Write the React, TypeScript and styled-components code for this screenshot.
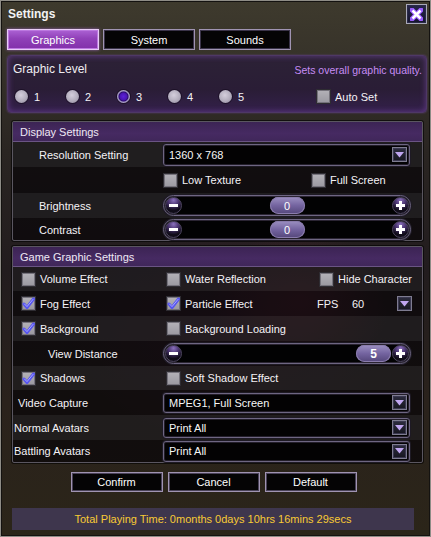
import React from 'react';
import styled, { createGlobalStyle, css } from 'styled-components';

const GlobalStyle = createGlobalStyle`
  html, body { margin: 0; padding: 0; background: #000; }
  * { box-sizing: border-box; }
  body {
    font-family: 'Liberation Sans', Arial, sans-serif;
    font-size: 11px;
    color: #f4f2f6;
  }
`;

const Window = styled.div`
  width: 431px;
  height: 537px;
  display: flex;
  flex-direction: column;
  overflow: hidden;
  border: 1px solid #8e8c86;
  box-shadow: inset 0 0 0 1px #141210;
  background:
    radial-gradient(ellipse 90px 70px at 300px 300px, rgba(120, 40, 60, 0.45), transparent),
    radial-gradient(ellipse 160px 110px at 230px 330px, rgba(70, 30, 60, 0.5), transparent),
    linear-gradient(180deg, #3e3a2d 0%, #37332a 10%, #2a2522 28%, #221c1e 50%, #2a221c 75%, #2b2519 100%);
`;

const TitleBar = styled.div`
  height: 27px;
  display: flex;
  align-items: flex-start;
  padding: 0 3px 0 7px;
`;

const Title = styled.div`
  font-weight: bold;
  font-size: 12px;
  line-height: 26px;
  color: #f2f2f2;
`;

const CloseButton = styled.div`
  margin-left: auto;
  margin-top: 3px;
  width: 21px;
  height: 20px;
  display: flex;
  align-items: center;
  justify-content: center;
  background: linear-gradient(180deg, #26264a, #14142c);
  border: 1px solid #a8a8b8;
  box-shadow: inset 0 0 0 1px #2a2a48;
`;

const TabRow = styled.div`
  display: flex;
  gap: 4px;
  margin-top: 1px;
  padding-left: 6px;
`;

const Tab = styled.div<{ $active?: boolean }>`
  width: 92px;
  height: 21px;
  display: flex;
  align-items: center;
  justify-content: center;
  color: #fff;
  ${(p) =>
    p.$active
      ? css`
          background: linear-gradient(180deg, #ac62d4 0%, #9040b8 45%, #8230aa 100%);
          border: 1px solid #e8ccf6;
          box-shadow: inset 0 0 0 1px #bc78e0, 0 0 3px rgba(200, 120, 255, 0.6);
        `
      : css`
          background: #050405;
          border: 1px solid #a094b2;
          box-shadow: inset 0 0 0 1px #3a3348;
        `}
`;

const LevelPanel = styled.div`
  margin: 5px 3px 0 6px;
  height: 58px;
  border-radius: 4px;
  border: 1px solid #4e3866;
  background: linear-gradient(180deg, #2c2236 0%, #2a1d36 60%, #33204a 100%);
  box-shadow: inset 0 0 6px rgba(160, 90, 220, 0.45), 0 0 2px rgba(120, 70, 170, 0.6);
  padding: 0 4px 0 5px;
  display: flex;
  flex-direction: column;
`;

const LevelTop = styled.div`
  height: 26px;
  display: flex;
  align-items: center;
  justify-content: space-between;
`;

const LevelTitle = styled.span`
  font-size: 12px;
  color: #f0eef2;
`;

const LevelHint = styled.span`
  font-size: 10.5px;
  color: #c68cf4;
  margin-top: 3px;
`;

const RadioRow = styled.div`
  height: 32px;
  display: flex;
  align-items: center;
  padding-left: 2px;
`;

const RadioItem = styled.div`
  width: 51px;
  display: flex;
  align-items: center;
  gap: 6px;
`;

const AutoSetCell = styled.div`
  margin-left: 46px;
`;

const Radio = styled.span<{ $on?: boolean }>`
  width: 13px;
  height: 13px;
  border-radius: 50%;
  box-shadow: 0 0 0 1px rgba(20, 10, 30, 0.6);
  background: ${(p) =>
    p.$on
      ? 'radial-gradient(circle at 50% 50%, #5c22d8 0, #4a14b4 3.5px, #2c0c70 4.5px, #9a8cc0 5.5px, #b8b0cc 6.5px)'
      : 'radial-gradient(circle at 45% 40%, #d4cedc 0, #b2acbc 55%, #8a8496 100%)'};
`;

const Panel = styled.div<{ $h: number; $mt: number }>`
  margin: ${(p) => p.$mt}px 7px 0 11px;
  height: ${(p) => p.$h}px;
  border: 1px solid #5a5660;
  border-radius: 2px;
  box-shadow: 0 0 0 1px rgba(0, 0, 0, 0.6);
  background: rgba(8, 6, 8, 0.72);
  display: flex;
  flex-direction: column;
`;

const PanelHeader = styled.div`
  height: 20px;
  flex: none;
  display: flex;
  align-items: center;
  padding-left: 7px;
  color: #eee8f4;
  background: linear-gradient(180deg, #3c2454 0%, #462a62 60%, #40275a 100%);
  border-bottom: 1px solid #6a5484;
`;

const Row = styled.div<{ $h: number; $alt?: boolean; $pl?: number }>`
  height: ${(p) => p.$h}px;
  flex: none;
  display: flex;
  align-items: center;
  padding-left: ${(p) => p.$pl ?? 0}px;
  background: ${(p) => (p.$alt ? 'rgba(255, 255, 255, 0.065)' : 'transparent')};
`;

const LabelCell = styled.div<{ $w: number; $pl: number }>`
  width: ${(p) => p.$w}px;
  padding-left: ${(p) => p.$pl}px;
  flex: none;
  white-space: nowrap;
`;

const CheckItem = styled.div<{ $w?: number }>`
  width: ${(p) => (p.$w ? `${p.$w}px` : 'auto')};
  flex: none;
  display: flex;
  align-items: center;
  gap: 4px;
  white-space: nowrap;
`;

const Box = styled.span`
  width: 15px;
  height: 15px;
  flex: none;
  border: 1px solid #2e2c32;
  background: linear-gradient(180deg, #b4b2b8, #9a98a0);
  box-shadow: inset 0 0 0 1px #76737c;
  display: flex;
  align-items: center;
  justify-content: center;
`;

const Select = styled.div<{ $h: number }>`
  width: 247px;
  height: ${(p) => p.$h}px;
  flex: none;
  display: flex;
  align-items: center;
  padding: 0 2px 0 5px;
  background: #030203;
  border: 1px solid #6e6682;
  border-radius: 3px;
  box-shadow: 0 0 0 1px #1e1a24, inset 0 0 0 1px #231e2a;
  color: #f6f6f6;
`;

const ArrowButton = styled.span`
  margin-left: auto;
  width: 15px;
  height: 15px;
  flex: none;
  display: flex;
  align-items: center;
  justify-content: center;
  background: linear-gradient(180deg, #2c2c3e, #16161f);
  border: 1px solid #7e7c90;
  box-shadow: inset 0 0 0 1px #3a3850;
`;

const Track = styled.div`
  width: 248px;
  height: 21px;
  flex: none;
  display: flex;
  align-items: center;
  padding: 0 1px;
  border-radius: 11px;
  background: #020203;
  border: 1px solid #6e6682;
  box-shadow: 0 0 0 1px #1e1a24, inset 0 0 0 1px #2a2432;
`;

const RoundButton = styled.span`
  width: 17px;
  height: 17px;
  flex: none;
  border-radius: 50%;
  display: flex;
  align-items: center;
  justify-content: center;
  background: radial-gradient(circle at 50% 15%, #8a70bc 0%, #4a3470 35%, #100c18 70%);
  border: 1px solid #4e4660;
`;

const ThumbArea = styled.div`
  position: relative;
  flex: 1;
  height: 17px;
`;

const Thumb = styled.span<{ $bold?: boolean }>`
  position: absolute;
  top: 0;
  width: 35px;
  height: 17px;
  border-radius: 9px;
  display: flex;
  align-items: center;
  justify-content: center;
  background: linear-gradient(180deg, #9c90c2 0%, #7464a0 50%, #54467a 100%);
  box-shadow: inset 0 0 0 1px #8a7cac;
  color: #fff;
  font-size: ${(p) => (p.$bold ? 12 : 11)}px;
  font-weight: ${(p) => (p.$bold ? 'bold' : 'normal')};
`;

const FpsCell = styled.div`
  flex: 1;
  display: flex;
  align-items: center;
  margin-left: -2px;
  padding-right: 10px;
`;

const FpsLabel = styled.span`
  width: 35px;
`;

const ButtonRow = styled.div`
  margin-top: 9px;
  display: flex;
  justify-content: center;
  gap: 5px;
  padding-right: 4px;
`;

const ActionButton = styled.div`
  width: 92px;
  height: 20px;
  display: flex;
  align-items: center;
  justify-content: center;
  color: #fff;
  background: #050405;
  border: 1px solid #a094b2;
  box-shadow: inset 0 0 0 1px #4a4258;
`;

const Footer = styled.div`
  margin: 16px 0 0 11px;
  width: 402px;
  height: 22px;
  display: flex;
  align-items: center;
  justify-content: center;
  background: rgba(78, 70, 120, 0.55);
  color: #f8ca34;
`;

const CheckMark = () => (
  <svg width="13" height="13" viewBox="0 0 13 13">
    <path d="M2 7 L5 10.5 L11.5 2" fill="none" stroke="#5654f0" strokeWidth="3" strokeLinecap="round" strokeLinejoin="round" />
    <path d="M2.5 7 L5 9.6 L11 2.4" fill="none" stroke="#aaa8ff" strokeWidth="1" strokeLinecap="round" />
  </svg>
);

const Check = ({ label, checked, w }: { label: string; checked?: boolean; w?: number }) => (
  <CheckItem $w={w}>
    <Box>{checked && <CheckMark />}</Box>
    <span>{label}</span>
  </CheckItem>
);

const DownArrow = () => (
  <svg width="9" height="6" viewBox="0 0 9 6">
    <path d="M0 0 H9 L4.5 5.5 Z" fill="#c0a6f0" />
  </svg>
);

const Dropdown = ({ value, h }: { value: string; h: number }) => (
  <Select $h={h}>
    <span>{value}</span>
    <ArrowButton>
      <DownArrow />
    </ArrowButton>
  </Select>
);

const Slider = ({ value, min, max, bold }: { value: number; min: number; max: number; bold?: boolean }) => {
  const pct = (value - min) / (max - min);
  return (
    <Track>
      <RoundButton>
        <svg width="9" height="9" viewBox="0 0 9 9">
          <rect x="0" y="3" width="9" height="3" fill="#fff" />
        </svg>
      </RoundButton>
      <ThumbArea>
        <Thumb $bold={bold} style={{ left: `calc(${pct} * (100% - 37px) + 1px)` }}>
          {value}
        </Thumb>
      </ThumbArea>
      <RoundButton>
        <svg width="9" height="9" viewBox="0 0 9 9">
          <rect x="0" y="3" width="9" height="3" fill="#fff" />
          <rect x="3" y="0" width="3" height="9" fill="#fff" />
        </svg>
      </RoundButton>
    </Track>
  );
};

const levels = [1, 2, 3, 4, 5];

export default function App() {
  return (
    <>
      <GlobalStyle />
      <Window>
        <TitleBar>
          <Title>Settings</Title>
          <CloseButton>
            <svg width="13" height="13" viewBox="0 0 13 13">
              <path d="M2 2 L11 11 M11 2 L2 11" stroke="#9a5cff" strokeWidth="5" strokeLinecap="square" />
              <path d="M2.5 2.5 L10.5 10.5 M10.5 2.5 L2.5 10.5" stroke="#fff" strokeWidth="2.6" />
            </svg>
          </CloseButton>
        </TitleBar>

        <TabRow>
          <Tab $active>Graphics</Tab>
          <Tab>System</Tab>
          <Tab>Sounds</Tab>
        </TabRow>

        <LevelPanel>
          <LevelTop>
            <LevelTitle>Graphic Level</LevelTitle>
            <LevelHint>Sets overall graphic quality.</LevelHint>
          </LevelTop>
          <RadioRow>
            {levels.map((l) => (
              <RadioItem key={l}>
                <Radio $on={l === 3} />
                <span>{l}</span>
              </RadioItem>
            ))}
            <AutoSetCell>
              <Check label="Auto Set" />
            </AutoSetCell>
          </RadioRow>
        </LevelPanel>

        <Panel $h={120} $mt={8}>
          <PanelHeader>Display Settings</PanelHeader>
          <Row $h={25} $alt>
            <LabelCell $w={150} $pl={26}>Resolution Setting</LabelCell>
            <Dropdown value="1360 x 768" h={22} />
          </Row>
          <Row $h={26} $pl={150}>
            <Check label="Low Texture" w={148} />
            <Check label="Full Screen" />
          </Row>
          <Row $h={25} $alt>
            <LabelCell $w={150} $pl={26}>Brightness</LabelCell>
            <Slider value={0} min={-10} max={10} />
          </Row>
          <Row $h={23}>
            <LabelCell $w={150} $pl={26}>Contrast</LabelCell>
            <Slider value={0} min={-10} max={10} />
          </Row>
        </Panel>

        <Panel $h={217} $mt={5}>
          <PanelHeader>Game Graphic Settings</PanelHeader>
          <Row $h={24} $alt $pl={8}>
            <Check label="Volume Effect" w={145} />
            <Check label="Water Reflection" w={153} />
            <Check label="Hide Character" />
          </Row>
          <Row $h={25} $pl={8}>
            <Check label="Fog Effect" checked w={145} />
            <Check label="Particle Effect" checked w={153} />
            <FpsCell>
              <FpsLabel>FPS</FpsLabel>
              <span>60</span>
              <ArrowButton>
                <DownArrow />
              </ArrowButton>
            </FpsCell>
          </Row>
          <Row $h={25} $alt $pl={8}>
            <Check label="Background" checked w={145} />
            <Check label="Background Loading" />
          </Row>
          <Row $h={25}>
            <LabelCell $w={150} $pl={35}>View Distance</LabelCell>
            <Slider value={5} min={1} max={5} bold />
          </Row>
          <Row $h={24} $alt $pl={8}>
            <Check label="Shadows" checked w={145} />
            <Check label="Soft Shadow Effect" />
          </Row>
          <Row $h={25}>
            <LabelCell $w={150} $pl={5}>Video Capture</LabelCell>
            <Dropdown value="MPEG1, Full Screen" h={20} />
          </Row>
          <Row $h={25} $alt>
            <LabelCell $w={150} $pl={1}>Normal Avatars</LabelCell>
            <Dropdown value="Print All" h={20} />
          </Row>
          <Row $h={22}>
            <LabelCell $w={150} $pl={1}>Battling Avatars</LabelCell>
            <Dropdown value="Print All" h={21} />
          </Row>
        </Panel>

        <ButtonRow>
          <ActionButton>Confirm</ActionButton>
          <ActionButton>Cancel</ActionButton>
          <ActionButton>Default</ActionButton>
        </ButtonRow>

        <Footer>Total Playing Time: 0months 0days 10hrs 16mins 29secs</Footer>
      </Window>
    </>
  );
}
